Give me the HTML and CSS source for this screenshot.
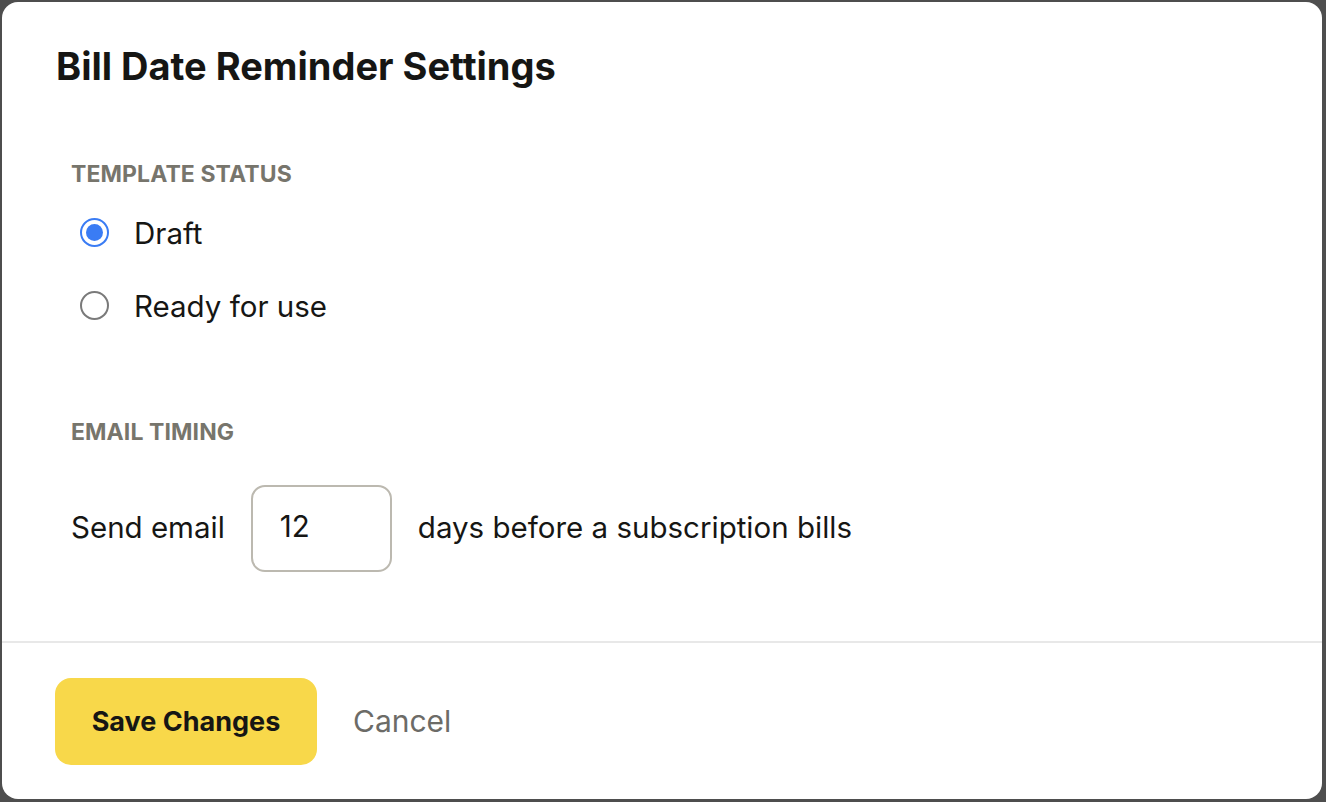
FILE: index.html
```html
<!DOCTYPE html>
<html>
<head>
<meta charset="utf-8">
<link rel="stylesheet" href="styles.css">
</head>
<body>
<div class="dialog">
  <div class="dialog-body">
    <h1 class="title">Bill Date Reminder Settings</h1>
    <section class="section status">
      <h2 class="label">TEMPLATE STATUS</h2>
      <label class="radio-row">
        <span class="radio checked"></span>
        <span class="radio-text">Draft</span>
      </label>
      <label class="radio-row">
        <span class="radio"></span>
        <span class="radio-text">Ready for use</span>
      </label>
    </section>
    <section class="section timing">
      <h2 class="label">EMAIL TIMING</h2>
      <div class="timing-row">
        <span class="timing-text">Send email</span>
        <div class="num-input">12</div>
        <span class="timing-text">days before a subscription bills</span>
      </div>
    </section>
  </div>
  <div class="dialog-footer">
    <button class="btn-primary">Save Changes</button>
    <button class="btn-link">Cancel</button>
  </div>
</div>
</body>
</html>
```
FILE: styles.css
```css
* { box-sizing: border-box; }
html, body { margin: 0; padding: 0; }
body {
  background: #4e4e4e;
  width: 1326px;
  height: 802px;
  overflow: hidden;
  font-family: Inter, "Noto Sans", sans-serif;
  color: #161614;
  padding: 2px 4px 3px 2px;
}
.dialog {
  width: 1320px;
  height: 797px;
  background: #fff;
  border-radius: 16px;
  display: flex;
  flex-direction: column;
}
.dialog-body {
  flex: 0 0 639px;
  padding: 41px 0 0 54px;
}
.title {
  margin: 0;
  font-size: 38px;
  font-weight: 700;
  line-height: 46px;
  letter-spacing: 0;
}
.section { padding-left: 15px; }
.status { margin-top: 71px; }
.label {
  margin: 0;
  font-size: 23px;
  font-weight: 700;
  color: #77756c;
  line-height: 28px;
  letter-spacing: 0.1px;
}
.radio-row {
  display: flex;
  align-items: center;
  height: 73px;
  gap: 25px;
  margin-left: 9px;
}
.status .label + .radio-row { margin-top: 8px; }
.radio {
  flex: 0 0 auto;
  width: 29px;
  height: 29px;
  border-radius: 50%;
  border: 2px solid #7a7a7a;
  background: #fff;
  display: flex;
  align-items: center;
  justify-content: center;
}
.radio.checked { border: 2.5px solid #3a7cf4; }
.radio.checked::after {
  content: "";
  width: 17px;
  height: 17px;
  border-radius: 50%;
  background: #3a7cf4;
}
.radio-text { font-size: 29.5px; line-height: 36px; }
.timing { margin-top: 76px; }
.timing-row {
  display: flex;
  align-items: center;
  gap: 26px;
  margin-top: 39px;
}
.timing-text { font-size: 29.5px; line-height: 36px; padding-bottom: 4px; }
.num-input {
  width: 141px;
  height: 87px;
  border: 2px solid #bcb9b0;
  border-radius: 14px;
  font-size: 29.5px;
  line-height: 79px;
  padding-left: 27px;
}
.dialog-footer {
  border-top: 2px solid #e8e8e8;
  flex: 1;
  display: flex;
  align-items: center;
  padding: 0 0 0 53px;
  gap: 36px;
}
.btn-primary {
  width: 262px;
  height: 87px;
  border: none;
  border-radius: 16px;
  background: #f8d84a;
  font-family: inherit;
  font-size: 27px;
  font-weight: 700;
  color: #161614;
}
.btn-link {
  border: none;
  background: none;
  padding: 0;
  font-family: inherit;
  font-size: 30px;
  color: #6c6b67;
}
```
